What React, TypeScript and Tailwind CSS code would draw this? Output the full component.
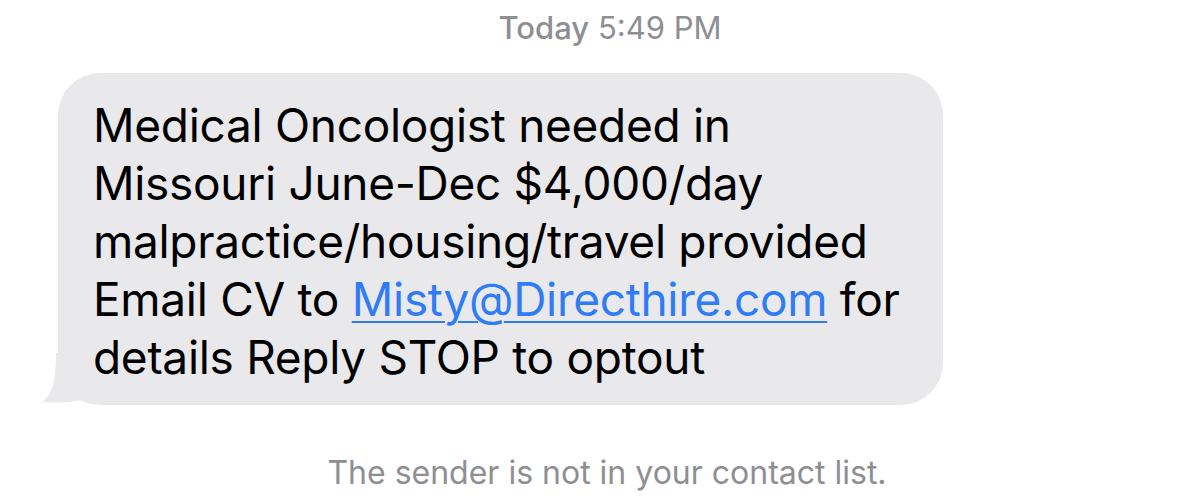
export default function App() {
  return (
    <div className="w-[1200px] h-[500px] bg-white overflow-hidden flex flex-col" style={{ fontFamily: 'Inter, "Noto Sans", sans-serif' }}>
      <div className="pt-[9px] pl-[20px] text-center text-[31px] leading-[38px] text-[#8e8e93]">
        <span className="font-medium">Today</span> 5:49 PM
      </div>
      <div className="mt-[26px] ml-[58px] relative w-[885px]">
        <div className="relative z-10 bg-[#e9e9eb] rounded-[42px] pl-[35px] pr-[20px] pt-[23px] pb-[19px] text-[46px] leading-[58px] text-black tracking-[-0.3px]">
          <div>Medical Oncologist needed in</div>
          <div>Missouri June-Dec $4,000/day</div>
          <div>malpractice/housing/travel provided</div>
          <div>
            Email CV to <span className="text-[#2f7cf6] underline decoration-[2px] underline-offset-[5px]">Misty@Directhire.com</span> for
          </div>
          <div>details Reply STOP to optout</div>
        </div>
        <svg className="absolute left-[-16px] bottom-[2px] z-0" width="60" height="50" viewBox="0 0 60 50">
          <path d="M14 0 L40 0 L50 44 C40 48 28 50 0 49 C10 42 14 30 14 0 Z" fill="#e9e9eb" />
        </svg>
      </div>
      <div className="mt-[49px] pl-[14px] text-center text-[32px] leading-[38px] text-[#8e8e93]">
        The sender is not in your contact list.
      </div>
    </div>
  );
}
